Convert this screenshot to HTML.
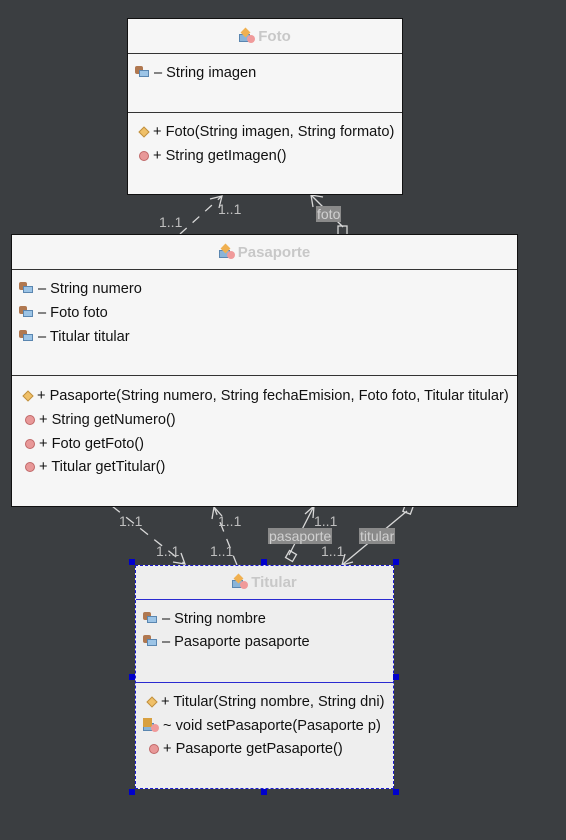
<!DOCTYPE html>
<html><head><meta charset="utf-8"><style>
body{margin:0;width:566px;height:840px;background:#3b3e41;position:relative;overflow:hidden;font-family:"Liberation Sans",Arial,sans-serif;font-size:14.6px;color:#111}
.box{position:absolute;background:#f6f6f6;border:1px solid #111;box-sizing:border-box}
.sep{position:absolute;left:0;right:0;height:0;border-top:1px solid #333}
.t{position:absolute;white-space:nowrap;line-height:16px}
.title{position:absolute;left:0;right:0;text-align:center;font-weight:bold;color:#c8c8c8;font-size:15px;line-height:16px}
.ia{display:inline-block;position:relative;width:15px;height:12px;vertical-align:-1px;margin-right:4px}
.ia:before{content:"";position:absolute;left:0;top:0;width:8px;height:8px;background:#b07850;border-radius:2px}
.ia:after{content:"";position:absolute;left:4px;top:4px;width:10px;height:7px;background:#9cc4e6;border:1px solid #5a86b0;box-sizing:border-box}
.im{display:inline-block;width:10px;height:10px;border-radius:50%;background:#e89898;border:1px solid #c06868;box-sizing:border-box;vertical-align:-1px;margin-right:4px}
.ic{display:inline-block;width:8px;height:8px;background:#f0c068;border:1px solid #c09040;transform:rotate(45deg);vertical-align:0;margin:0 5px 0 2px;box-sizing:border-box}
.ti{display:inline-block;position:relative;width:16px;height:14px;vertical-align:-2px;margin-right:3px}
.ti:before{content:"";position:absolute;left:0;top:5px;width:11px;height:8px;background:#8ab4d8;border:1px solid #5a86b0;box-sizing:border-box}
.ti:after{content:"";position:absolute;left:8px;top:6px;width:8px;height:8px;border-radius:50%;background:#f09a9a}
.ti i{position:absolute;left:3px;top:0;width:7px;height:7px;background:#f0b050;transform:rotate(45deg)}
.lbl{position:absolute;color:#bfbfbf;font-size:14px;line-height:14px}
.lblbg{position:absolute;background:#8a8a8a;color:#d0d0d0;font-size:14px;line-height:16px;padding:0 1px}
.h{position:absolute;width:6px;height:6px;background:#0000cc}
</style></head><body>
<svg width="566" height="840" style="position:absolute;left:0;top:0">
<g stroke="#d8d8d8" stroke-width="1.3" fill="none">
<line x1="180" y1="234" x2="222" y2="196" stroke-dasharray="9,8"/>
<polyline points="210,199 222,196 219,208"/>
<line x1="343" y1="227" x2="311" y2="195"/>
<polyline points="313,207 311,195 323,197"/>
<rect x="338" y="226" width="9" height="9"/>
<line x1="112" y1="506" x2="185" y2="564" stroke-dasharray="10,8"/>
<polyline points="173,562 185,564 181,553"/>
<line x1="237" y1="565" x2="214" y2="507" stroke-dasharray="10,8"/>
<polyline points="212,519 214,507 222,516"/>
<line x1="289" y1="555" x2="314" y2="506"/>
<polyline points="313,518 314,506 305,514"/>
<rect x="287" y="552" width="8" height="8" transform="rotate(30 291 556)"/>
<line x1="407" y1="511" x2="342" y2="565"/>
<polyline points="345,554 342,565 353,562"/>
<rect x="404" y="505" width="8" height="8" transform="rotate(20 408 509)"/>
</g></svg>
<div class="lbl" style="left:159px;top:215px">1..1</div>
<div class="lbl" style="left:218px;top:202px">1..1</div>
<div class="lblbg" style="left:316px;top:206px">foto</div>
<div class="lbl" style="left:119px;top:514px">1..1</div>
<div class="lbl" style="left:156px;top:544px">1..1</div>
<div class="lbl" style="left:218px;top:514px">1..1</div>
<div class="lbl" style="left:210px;top:544px">1..1</div>
<div class="lbl" style="left:314px;top:514px">1..1</div>
<div class="lblbg" style="left:268px;top:528px">pasaporte</div>
<div class="lbl" style="left:321px;top:544px">1..1</div>
<div class="lblbg" style="left:359px;top:528px">titular</div>

<div class="box" style="left:127px;top:18px;width:276px;height:177px">
<div class="title" style="top:10px"><span class="ti"><i></i></span>Foto</div>
<div class="sep" style="top:34px"></div>
<div class="t" style="left:7px;top:46px"><span class="ia"></span>– String imagen</div>
<div class="sep" style="top:93px"></div>
<div class="t" style="left:10px;top:105px"><span class="ic"></span>+ Foto(String imagen, String formato)</div>
<div class="t" style="left:11px;top:129px"><span class="im"></span>+ String getImagen()</div>
</div>

<div class="box" style="left:11px;top:234px;width:507px;height:273px">
<div class="title" style="top:10px"><span class="ti"><i></i></span>Pasaporte</div>
<div class="sep" style="top:34px"></div>
<div class="t" style="left:7px;top:46px"><span class="ia"></span>– String numero</div>
<div class="t" style="left:7px;top:70px"><span class="ia"></span>– Foto foto</div>
<div class="t" style="left:7px;top:94px"><span class="ia"></span>– Titular titular</div>
<div class="sep" style="top:140px"></div>
<div class="t" style="left:10px;top:153px"><span class="ic"></span>+ Pasaporte(String numero, String fechaEmision, Foto foto, Titular titular)</div>
<div class="t" style="left:13px;top:177px"><span class="im"></span>+ String getNumero()</div>
<div class="t" style="left:13px;top:201px"><span class="im"></span>+ Foto getFoto()</div>
<div class="t" style="left:13px;top:224px"><span class="im"></span>+ Titular getTitular()</div>
</div>

<div class="box" style="left:135px;top:565px;width:259px;height:224px;background:#eeeeee;border:1px dashed #1a1ad0">
<div class="title" style="top:9px"><span class="ti"><i></i></span>Titular</div>
<div class="sep" style="top:33px;border-color:#2a2ad0"></div>
<div class="t" style="left:7px;top:45px"><span class="ia"></span>– String nombre</div>
<div class="t" style="left:7px;top:68px"><span class="ia"></span>– Pasaporte pasaporte</div>
<div class="sep" style="top:116px;border-color:#2a2ad0"></div>
<div class="t" style="left:10px;top:128px"><span class="ic"></span>+ Titular(String nombre, String dni)</div>
<div class="t" style="left:7px;top:152px"><span class="ti" style="width:17px"><i style="border-radius:0;transform:none;left:0;top:0;width:9px;height:9px;background:#d8a040"></i></span>~ void setPasaporte(Pasaporte p)</div>
<div class="t" style="left:13px;top:175px"><span class="im"></span>+ Pasaporte getPasaporte()</div>
</div>
<div class="h" style="left:129px;top:559px"></div>
<div class="h" style="left:261px;top:559px"></div>
<div class="h" style="left:393px;top:559px"></div>
<div class="h" style="left:129px;top:674px"></div>
<div class="h" style="left:393px;top:674px"></div>
<div class="h" style="left:129px;top:789px"></div>
<div class="h" style="left:261px;top:789px"></div>
<div class="h" style="left:393px;top:789px"></div>
</body></html>
